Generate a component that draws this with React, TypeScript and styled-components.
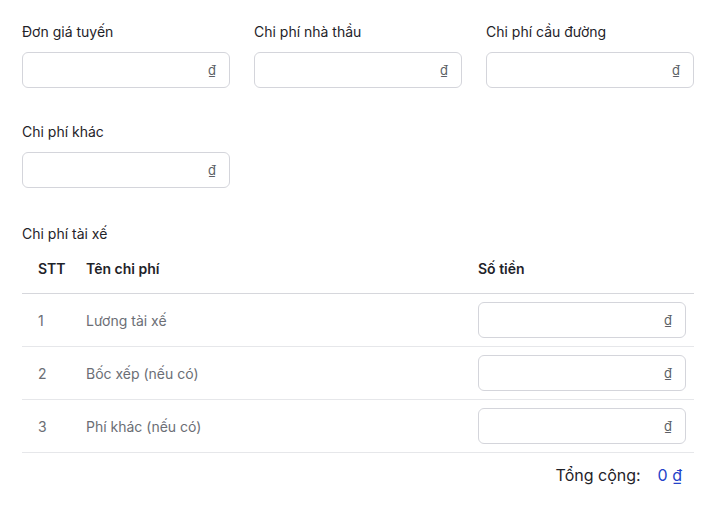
import styled, { createGlobalStyle } from "styled-components";

const GlobalStyle = createGlobalStyle`
  body {
    margin: 0;
    background: #ffffff;
    font-family: Inter, "Noto Sans", sans-serif;
    color: #1f2329;
  }
`;

const Page = styled.div`
  width: 715px;
  padding: 22px 21px 0 22px;
  box-sizing: border-box;
`;

const FieldGrid = styled.div`
  display: grid;
  grid-template-columns: repeat(3, 208px);
  column-gap: 24px;
  row-gap: 34px;
`;

const Field = styled.div`
  display: flex;
  flex-direction: column;
  gap: 10px;
`;

const Label = styled.label`
  font-size: 14px;
  line-height: 20px;
  color: #1f2329;
`;

const InputBox = styled.div`
  height: 36px;
  box-sizing: border-box;
  border: 1px solid #d4d5db;
  border-radius: 6px;
  display: flex;
  align-items: center;
  justify-content: flex-end;
  padding: 0 13px;
  background: #fff;
`;

const Currency = styled.span`
  font-size: 13px;
  color: #5c5f66;
  text-decoration: underline;
`;

const Section = styled.div`
  margin-top: 35px;
`;

const Table = styled.div`
  width: 672px;
`;

const Row = styled.div<{ $head?: boolean }>`
  display: grid;
  grid-template-columns: 64px 392px 1fr;
  align-items: center;
  height: ${(p) => (p.$head ? "49px" : "52px")};
  padding-right: 8px;
  border-bottom: 1px solid ${(p) => (p.$head ? "#d6d7dc" : "#e6e7ea")};
  font-size: 14px;
  color: ${(p) => (p.$head ? "#1f2329" : "#6b6e75")};
  font-weight: ${(p) => (p.$head ? 600 : 400)};
`;

const Cell = styled.div<{ $first?: boolean }>`
  padding-left: ${(p) => (p.$first ? "16px" : "0")};
  padding-right: 8px;
`;

const Total = styled.div`
  display: flex;
  justify-content: flex-end;
  align-items: center;
  gap: 17px;
  padding-right: 12px;
  height: 44px;
  font-size: 16px;
`;

const TotalLabel = styled.span`
  color: #1f2329;
`;

const TotalValue = styled.span`
  color: #2443c9;
`;

const TotalCurrency = styled.span`
  text-decoration: underline;
`;

const MoneyInput = () => (
  <InputBox>
    <Currency>₫</Currency>
  </InputBox>
);

const fields = ["Đơn giá tuyến", "Chi phí nhà thầu", "Chi phí cầu đường", "Chi phí khác"];
const rows = ["Lương tài xế", "Bốc xếp (nếu có)", "Phí khác (nếu có)"];

export default function App() {
  return (
    <>
      <GlobalStyle />
      <Page>
        <FieldGrid>
          {fields.map((f) => (
            <Field key={f}>
              <Label>{f}</Label>
              <MoneyInput />
            </Field>
          ))}
        </FieldGrid>
        <Section>
          <Label>Chi phí tài xế</Label>
          <Table>
            <Row $head>
              <Cell $first>STT</Cell>
              <Cell>Tên chi phí</Cell>
              <Cell>Số tiền</Cell>
            </Row>
            {rows.map((r, i) => (
              <Row key={r}>
                <Cell $first>{i + 1}</Cell>
                <Cell>{r}</Cell>
                <MoneyInput />
              </Row>
            ))}
          </Table>
          <Total>
            <TotalLabel>Tổng cộng:</TotalLabel>
            <TotalValue>
              0 <TotalCurrency>₫</TotalCurrency>
            </TotalValue>
          </Total>
        </Section>
      </Page>
    </>
  );
}
